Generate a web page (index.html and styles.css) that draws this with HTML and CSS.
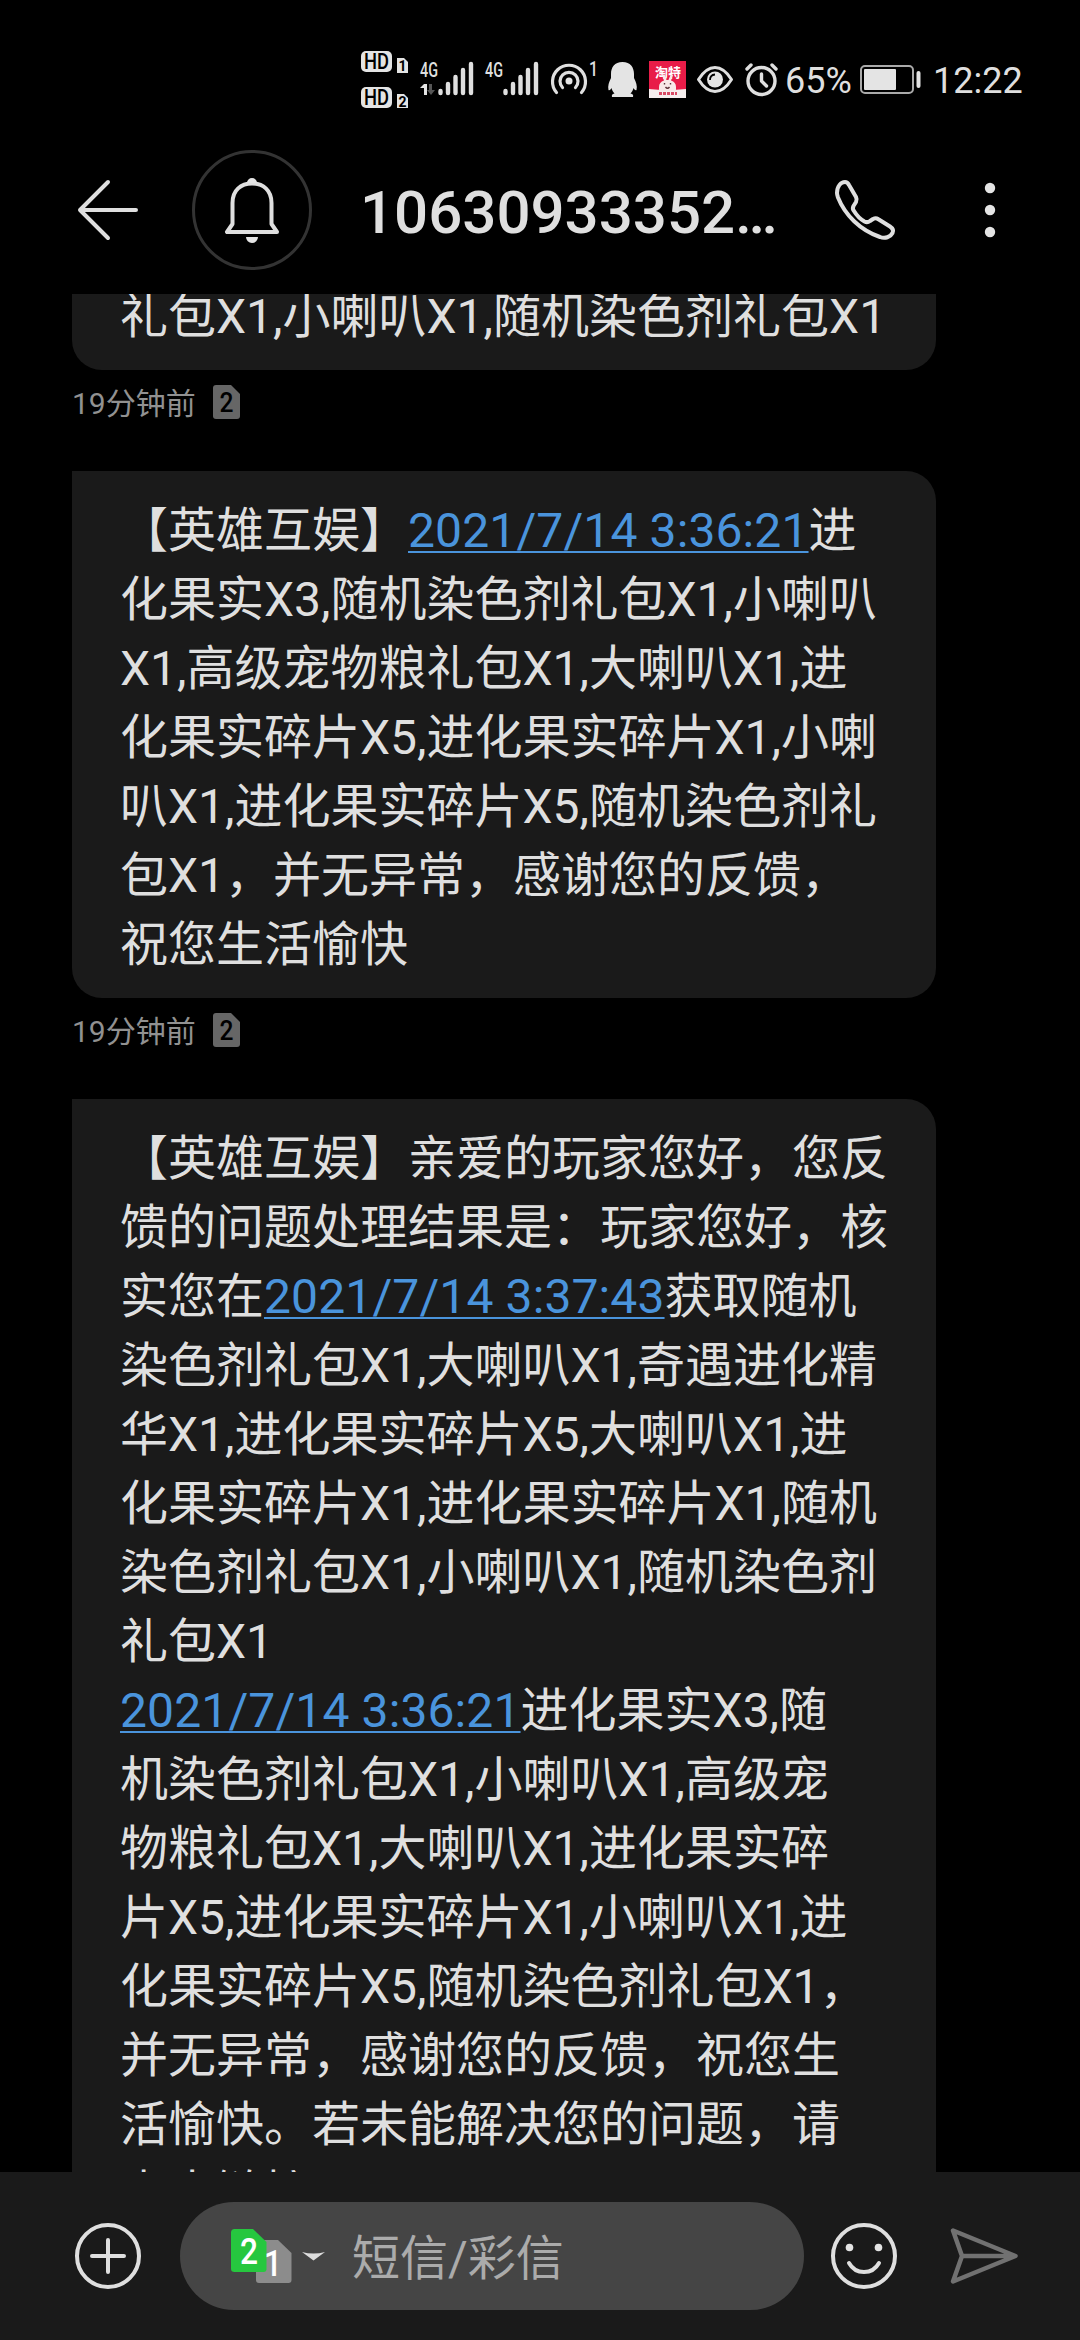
FILE: index.html
```html
<!DOCTYPE html>
<html lang="zh-CN">
<head>
<meta charset="utf-8">
<title>短信</title>
<link rel="stylesheet" href="styles.css">
</head>
<body>
<svg class="defs" width="0" height="0" aria-hidden="true">
  <symbol id="sim" viewBox="0 0 27 34"><path d="M3 0H18L27 9V31Q27 34 24 34H3Q0 34 0 31V3Q0 0 3 0Z"/></symbol>
</svg>
<div class="status">
  <svg width="58" height="60" viewBox="360 50 58 60">
    <rect class="fill" x="361" y="51" width="31" height="21" rx="5"/>
    <rect class="fill" x="361" y="87" width="31" height="21" rx="5"/>
    <text class="hd" x="364" y="69" textLength="25" lengthAdjust="spacingAndGlyphs">HD</text>
    <text class="hd" x="364" y="105" textLength="25" lengthAdjust="spacingAndGlyphs">HD</text>
    <path class="fill" d="M397 58H404L408 62V73H397ZM397 94H404L408 98V108H397Z"/>
    <text class="simno" x="402.5" y="71" text-anchor="middle">1</text>
    <text class="simno" x="402.5" y="106.500" text-anchor="middle">2</text>
  </svg>
  <svg width="64" height="60" viewBox="418 50 64 60">
    <text class="net" x="420" y="77" textLength="18" lengthAdjust="spacingAndGlyphs">4G</text>
    <path class="fill" d="M420 88L424 84H427V95H424V88Z"/>
    <path d="M429 84V90H427L431 95L435 90H432V84Z" fill="#555"/>
    <path class="bars" d="M440.500 91V93M448 84V93M455.500 77V93M463 70V93M471 64V93"/>
  </svg>
  <svg width="64" height="60" viewBox="482 50 64 60">
    <text class="net" x="485" y="77" textLength="18" lengthAdjust="spacingAndGlyphs">4G</text>
    <path class="bars" d="M505.500 91V93M513 84V93M520.500 77V93M528 70V93M536 64V93"/>
  </svg>
  <svg width="55" height="60" viewBox="546 50 55 60">
    <circle class="fill" cx="569" cy="81" r="3.500"/>
    <path class="line" stroke-width="3.200" d="M556.500 92.500A16.500 16.500 0 1 1 581.500 92.500M562.500 87.500A9 9 0 1 1 575.500 87.500"/>
    <text class="net" x="589" y="76" textLength="9" lengthAdjust="spacingAndGlyphs">1</text>
  </svg>
  <svg width="42" height="60" viewBox="601 50 42 60">
    <path class="fill" d="M622.500 62C614.500 62 611 67.500 611 74V78C609 82 607.500 86 608.500 90C609.500 91 611 89 611.500 88C612 90 613 92 614.500 93.500C612 94 611.500 95 612 97H633C633.500 95 633 94 630.500 93.500C632 92 633 90 633.500 88C634 89 635.500 91 636.500 90C637.500 86 636 82 634 78V74C634 67.500 630.500 62 622.500 62Z"/>
  </svg>
  <svg width="51" height="60" viewBox="643 50 51 60">
    <rect x="649" y="61" width="37" height="37" fill="#e81c48"/>
    <path d="M649 89Q658 90 667 90T686 89V98H649Z" fill="#f5eeee"/>
    <text class="taote" x="668" y="77" text-anchor="middle">淘特</text>
    <path d="M659 91V87Q659 82 664 80.500L662 75Q664 73 666.500 80H668.500Q671 73 673 75L671 80.500Q676 82 676 87V91Z" fill="#f8e8e8"/>
    <path d="M664.500 83V84.500M670.500 83V84.500M665.500 87Q667.500 89.500 669.500 87" fill="none" stroke="#5c3038" stroke-width="1.400"/>
    <path d="M659 93.500H677" stroke="#d84a64" stroke-width="3" stroke-dasharray="3 1"/>
  </svg>
  <svg width="47" height="60" viewBox="694 50 47 60">
    <path class="line" stroke-width="3" d="M698.500 79.500Q706 67.500 715 67.500T731.500 79.500Q724 91.500 715 91.500T698.500 79.500Z"/>
    <circle class="fill" cx="715" cy="79.500" r="8"/>
    <path d="M710 80Q710 75 715 74.500" fill="none" stroke="#000" stroke-width="1.800"/>
  </svg>
  <svg width="44" height="60" viewBox="741 50 44 60">
    <circle class="line" stroke-width="3.400" cx="761.500" cy="81" r="13.500"/>
    <path class="line" stroke-width="3.400" d="M747 69L751 65M776 69L772 65M761.500 74V81L766.500 86"/>
  </svg>
  <span class="percent">65%</span>
  <svg width="78" height="60" viewBox="855 50 78 60">
    <rect x="861" y="66" width="52" height="27" rx="4" fill="none" stroke="#aaa" stroke-width="2"/>
    <rect class="fill" x="864" y="69" width="32" height="21" rx="1"/>
    <rect class="fill" x="916.500" y="71" width="4" height="17" rx="2"/>
  </svg>
  <span class="clock">12:22</span>
</div>
<header class="header">
  <svg class="back" width="64" height="64" viewBox="76 178 64 64"><path class="line" stroke-width="4" d="M136 210H80M108 182L80 210L108 238"/></svg>
  <div class="avatar">
    <svg width="60" height="70" viewBox="222 175 60 70">
      <path class="line" stroke-width="4" stroke-linejoin="miter" d="M227 232H277L271.500 224V203C271.500 190 263 183.500 252 183.500S232.500 190 232.500 203V224Z"/>
      <path class="fill" d="M247 183A5 5 0 0 1 257 183ZM246 237H258A6 6 0 0 1 246 237Z"/>
    </svg>
  </div>
  <h1 class="title">10630933352…</h1>
  <svg class="call" width="64" height="64" viewBox="833 177 64 64">
    <path class="line" stroke-width="4" d="M837 192C837 185 841 181 845 181C847 181 848 182 849 184L856 196C857 198 857 199 856 201L853.500 205C852.500 207 853 209 854 210C857 215 860 218 864.500 220.500C866.500 221.500 868 221.500 870 220L873 218C875 217 876.500 217 878 218L890 225.500C893 227.500 893.500 230 892.500 232C890.500 236 885 238 880 236C860 229 845 214 838 196.500C837.500 195 837 193.500 837 192Z"/>
  </svg>
  <svg width="14" height="60" viewBox="983 180 14 60"><circle class="fill" cx="990" cy="188" r="5.200"/><circle class="fill" cx="990" cy="210" r="5.200"/><circle class="fill" cx="990" cy="232" r="5.200"/></svg>
</header>
<main class="thread">
  <article class="bubble scrolled">礼包X1,小喇叭X1,随机染色剂礼包X1</article>
  <div class="meta"><span>19分钟前</span><svg class="badge" width="27" height="34" viewBox="0 0 27 34"><use href="#sim" width="27" height="34" fill="#666"/><text class="badge-no" x="6.500" y="27" textLength="14" lengthAdjust="spacingAndGlyphs">2</text></svg></div>
  <article class="bubble">【英雄互娱】<a class="link">2021/7/14 3:36:21</a>进<br>化果实X3,随机染色剂礼包X1,小喇叭<br>X1,高级宠物粮礼包X1,大喇叭X1,进<br>化果实碎片X5,进化果实碎片X1,小喇<br>叭X1,进化果实碎片X5,随机染色剂礼<br>包X1，并无异常，感谢您的反馈，<br>祝您生活愉快</article>
  <div class="meta"><span>19分钟前</span><svg class="badge" width="27" height="34" viewBox="0 0 27 34"><use href="#sim" width="27" height="34" fill="#666"/><text class="badge-no" x="6.500" y="27" textLength="14" lengthAdjust="spacingAndGlyphs">2</text></svg></div>
  <article class="bubble">【英雄互娱】亲爱的玩家您好，您反<br>馈的问题处理结果是：玩家您好，核<br>实您在<a class="link">2021/7/14 3:37:43</a>获取随机<br>染色剂礼包X1,大喇叭X1,奇遇进化精<br>华X1,进化果实碎片X5,大喇叭X1,进<br>化果实碎片X1,进化果实碎片X1,随机<br>染色剂礼包X1,小喇叭X1,随机染色剂<br>礼包X1<br><a class="link">2021/7/14 3:36:21</a>进化果实X3,随<br>机染色剂礼包X1,小喇叭X1,高级宠<br>物粮礼包X1,大喇叭X1,进化果实碎<br>片X5,进化果实碎片X1,小喇叭X1,进<br>化果实碎片X5,随机染色剂礼包X1，<br>并无异常，感谢您的反馈，祝您生<br>活愉快。若未能解决您的问题，请<br>点击链接</article>
</main>
<footer class="composer">
  <svg width="68" height="68" viewBox="74 2222 68 68"><circle class="line" stroke-width="4" cx="108" cy="2256" r="31"/><path class="line" stroke-width="4" d="M92 2256H124M108 2240V2272"/></svg>
  <div class="field">
    <svg width="98" height="60" viewBox="230 2226 98 60">
      <path d="M259 2240H278L291.500 2253V2280Q291.500 2283 288.500 2283H259Q256 2283 256 2280V2243Q256 2240 259 2240Z" fill="#8c8c8c"/>
      <path d="M234.500 2229H253L266.500 2242V2269Q266.500 2272 263.500 2272H234.500Q231 2272 231 2269V2232.500Q231 2229 234.500 2229Z" fill="#26c73f"/>
      <text class="slot" x="240" y="2264" textLength="18" lengthAdjust="spacingAndGlyphs">2</text>
      <text class="slot" x="264" y="2276" textLength="18" lengthAdjust="spacingAndGlyphs">1</text>
      <path d="M302 2252Q313.500 2255 325 2252L313.500 2260.500Z" fill="#ddd"/>
    </svg>
    <span class="placeholder">短信/彩信</span>
  </div>
  <svg width="68" height="68" viewBox="830 2222 68 68"><circle class="line" stroke-width="4" cx="864" cy="2256" r="31"/><circle class="fill" cx="849.500" cy="2247.500" r="3.800"/><circle class="fill" cx="878.500" cy="2247.500" r="3.800"/><path class="line" stroke-width="4" d="M849 2263Q854 2272 864 2272T879 2263"/></svg>
  <svg class="send" width="72" height="64" viewBox="949 2224 72 64"><path fill="none" stroke="#717171" stroke-width="4.500" stroke-linejoin="round" stroke-linecap="round" d="M953 2230.500L1015.500 2256L953 2281.500L962 2256ZM962 2256H1015"/></svg>
</footer>
</body>
</html>
```
FILE: styles.css
```css
* { box-sizing: border-box; }
body {
  margin: 0;
  width: 1080px;
  height: 2340px;
  overflow: hidden;
  display: flex;
  flex-direction: column;
  background: #000;
  color: #dfdfdf;
  font-family: Roboto, "Noto Sans CJK SC", sans-serif;
}
svg { display: block; flex: none; }
.defs { position: absolute; }
.fill { fill: #e4e4e4; }
.line { fill: none; stroke: #dfdfdf; stroke-linecap: round; stroke-linejoin: round; }
.bars { stroke: #dfdfdf; stroke-width: 4.4; stroke-linecap: round; }

.status {
  flex: none;
  height: 126px;
  padding: 50px 0 0 360px;
  display: flex;
  align-items: flex-start;
  font-size: 36px;
  line-height: 62px;
}
.percent { width: 70px; white-space: nowrap; }
.clock { white-space: nowrap; }
.hd { font-size: 22px; font-weight: 500; fill: #000; }
.simno { font-size: 14px; font-weight: 700; fill: #000; }
.net { font-size: 21px; font-weight: 500; fill: #dfdfdf; }
.taote { font-size: 13px; font-weight: 700; fill: #fff; }

.header {
  flex: none;
  height: 168px;
  padding: 0 83px 0 76px;
  display: flex;
  align-items: center;
}
.avatar {
  flex: none;
  width: 120px;
  height: 120px;
  margin-left: 52px;
  border: 3px solid #333;
  border-radius: 50%;
  display: flex;
  align-items: center;
  justify-content: center;
}
.title {
  flex: 1;
  margin: 0 0 0 48px;
  padding-top: 5px;
  font-size: 60px;
  line-height: 72px;
  font-weight: 500;
  white-space: nowrap;
}
.call { margin-right: 86px; }

.thread { flex: 1; min-height: 0; padding: 0 144px 0 72px; overflow: hidden; }
.bubble {
  padding: 25px 0 19px 48px;
  border-radius: 0 30px 30px 30px;
  background: #1a1a1a;
  font-size: 48px;
  line-height: 69px;
  white-space: nowrap;
}
.scrolled { margin-top: -37px; }
.link {
  color: #4a94dc;
  letter-spacing: 0.12px;
  text-decoration: underline;
  text-decoration-thickness: 2px;
  text-underline-offset: 4px;
}
.meta {
  height: 101px;
  padding-top: 15px;
  display: flex;
  align-items: flex-start;
  gap: 17px;
  font-size: 30px;
  line-height: 38px;
  color: #919191;
}
.badge-no { font-size: 28px; font-weight: 500; fill: #000; }

.composer {
  flex: none;
  height: 168px;
  padding: 0 59px 0 74px;
  display: flex;
  align-items: center;
  background: #1a1a1a;
}
.field {
  flex: none;
  width: 624px;
  height: 108px;
  margin: 0 26px 0 38px;
  padding-left: 50px;
  display: flex;
  align-items: center;
  gap: 24px;
  border-radius: 54px;
  background: #454545;
}
.placeholder { padding-top: 4px; font-size: 48px; line-height: 69px; color: #ababab; }
.slot { font-size: 37px; font-weight: 500; fill: #fff; }
.send { margin-left: 51px; }
```
